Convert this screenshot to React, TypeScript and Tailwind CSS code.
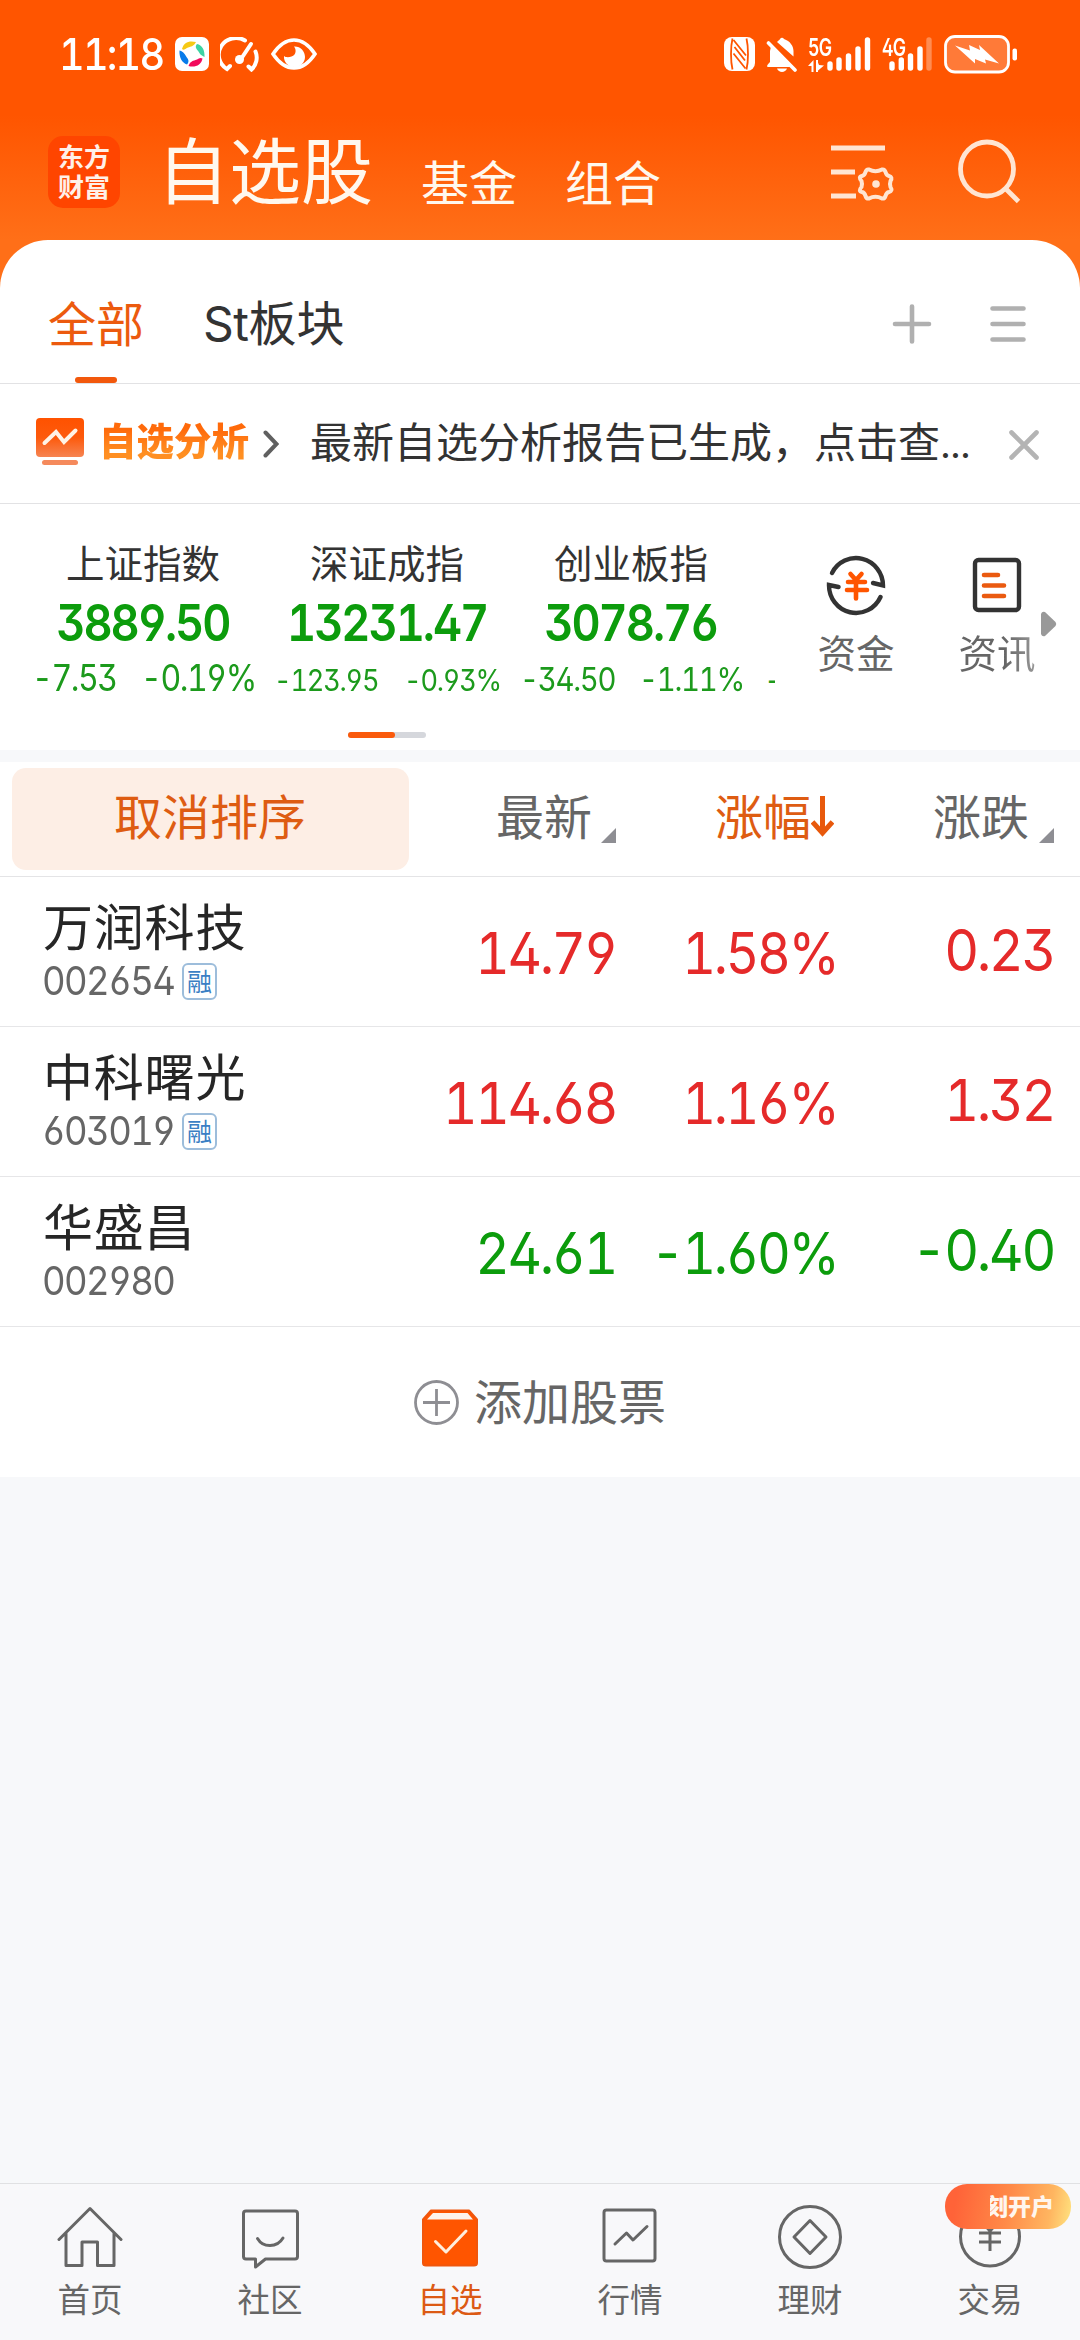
import type { ReactNode } from 'react';

type NumProps = { children: ReactNode; className?: string };

/** Condensed tabular figures used for every price on the page. */
function Num({ children, className = '' }: NumProps) {
  return (
    <span
      className={`inline-block whitespace-pre font-['Inter',sans-serif] leading-none tracking-[-0.045em] [font-feature-settings:'tnum','ss01','calt'_0] ${className}`}
    >
      {children}
    </span>
  );
}

function StatusBar() {
  return (
    <div className="flex h-[108px] items-center pl-[59px] pr-[62px] text-white">
      <span className="w-[116px] shrink-0">
        <Num className="origin-left scale-x-[0.9] text-[44px] font-medium">11:18</Num>
      </span>
      <svg width="34" height="34" viewBox="0 0 34 34">
        <rect width="34" height="34" rx="7" fill="#fff" />
        <path d="M7 12C9 5 14 3.500 21 5C19 9 16 9.500 13 10.500C10 11.500 9 14 7 12Z" fill="#f6c915" />
        <path d="M22 7C27 8 30 13 29.500 20C26 18.500 25 17 23.500 14.500C21.500 12 19.500 10 22 7Z" fill="#3cd3a3" />
        <path d="M4.500 13.500C9 15 10 17.500 11.500 20C13.500 22.500 14.500 24.500 12 27.500C7 26 4 20 4.500 13.500Z" fill="#087bea" />
        <path d="M13.500 29C15 25 17 24 20.500 23C23.500 22 25 20 27.500 21.500C26.500 28 20 31 13.500 29Z" fill="#f20a5c" />
      </svg>
      <svg className="ml-[11px]" width="39" height="35" viewBox="0 0 39 35" fill="none" stroke="#fff" strokeWidth="4" strokeLinecap="round">
        <path d="M25 3.500A17 16.500 0 0 0 7 32L10 29" />
        <path d="M35.500 14.500A17 16.500 0 0 1 31.500 32.500L28.500 29.500" />
        <path d="M31 7L21 22" strokeWidth="4" />
        <circle cx="19.500" cy="22.500" r="4.500" fill="#fff" stroke="none" />
      </svg>
      <svg className="ml-[12px]" width="46" height="32" viewBox="0 0 46 32">
        <path d="M2 16C8 7 15 2 23 2S38 7 44 16C38 25 31 30 23 30S8 25 2 16Z" fill="none" stroke="#fff" strokeWidth="3.600" />
        <path d="M23 8.500C29 8 34 13 34 19C34 25 29 29 23.500 29C17 29 12.500 24 13 18C15 20 21 19.500 23.500 16.500C25.500 13.500 24.500 10.500 23 8.500Z" fill="#fff" />
      </svg>

      <div className="ml-auto flex items-center">
        <svg width="31" height="34" viewBox="0 0 31 34">
          <rect width="31" height="34" rx="8" fill="#fff" />
          <path d="M8.500 1.500C6.500 10 6.500 24 8.500 32.500M22.500 1.500C24.500 10 24.500 24 22.500 32.500" fill="none" stroke="#ff5500" strokeWidth="1.800" />
          <path d="M9.500 3L22 18.500M10.500 10L21 23.500M9.500 16.500L21.500 31.500" fill="none" stroke="#ff5500" strokeWidth="1.800" />
        </svg>
        <svg className="ml-[11px]" width="32" height="35" viewBox="0 0 32 35">
          <path d="M11 5C12.500 3.500 13.500 3 14 2C15 .3 17 .3 18 2C24 4 27.500 9 27.500 14V19.500Z" fill="#fff" />
          <path d="M5 9.500L24.500 30H1.500C.5 28.500 1.500 27.500 4 25V14Z" fill="#fff" />
          <path d="M11 31.500H21C19.500 36 12.500 36 11 31.500Z" fill="#fff" />
          <path d="M2.500 6L29 33" stroke="#fff" strokeWidth="3.600" strokeLinecap="round" />
        </svg>
        <div className="ml-[10px] flex h-[36px] items-end">
          <div className="flex h-[36px] w-[19px] flex-col justify-between">
            <Num className="origin-left scale-x-[0.74] text-[24px] font-semibold">5G</Num>
            <svg width="17" height="12" viewBox="0 0 17 12" fill="#fff">
              <path d="M0 6L5.500 0V12H3.500V6ZM8 0H10L10 12H8ZM9.500 11V1.500L11 5L16 5.500Z" />
            </svg>
          </div>
          <svg width="44" height="36" viewBox="0 0 44 36" stroke="#fff" strokeWidth="5.400" strokeLinecap="round">
            <path d="M3 28V32M12 24V32M21.500 20V32M31 13V32M40.500 4V32" />
          </svg>
        </div>
        <div className="ml-[11px] flex h-[36px] items-end">
          <div className="flex h-[36px] w-[7px] flex-col">
            <Num className="origin-left scale-x-[0.74] text-[24px] font-semibold">4G</Num>
          </div>
          <svg width="44" height="36" viewBox="0 0 44 36" stroke="#fff" strokeWidth="5.400" strokeLinecap="round">
            <path d="M3 28V32M12.300 24V32M21.500 20V32M31 13V32" />
            <path d="M40 4V32" opacity=".32" />
          </svg>
        </div>
        <svg className="ml-[11px]" width="74" height="39" viewBox="0 0 74 39">
          <rect x="1.500" y="1.500" width="63" height="35.500" rx="9.500" fill="#ff7a38" stroke="#fff" strokeWidth="2.800" />
          <rect x="68.500" y="13.500" width="4.500" height="12" rx="2" fill="#fff" />
          <path d="M11 10.500L26 15.500L25 10L36 15L35 10L55 28.500L41 24.500L42 28.500L31 24L31 28.500Z" fill="#fff" />
        </svg>
      </div>
    </div>
  );
}

function Header() {
  return (
    <header className="h-[300px] shrink-0 bg-[linear-gradient(#ff5500_0,#ff5500_115px,#ff6f18_240px,#ff6f18_300px)]">
      <StatusBar />
      <div className="flex h-[132px] text-[#fff8ee]">
        <div className="ml-[48px] mt-[28px] flex h-[72px] w-[72px] items-start justify-center rounded-[15px] bg-[#ff4500] pt-[5px] text-[#fff0e8]">
          <span className="w-[52px] break-all text-[26px] font-bold leading-[30px]">东方财富</span>
        </div>
        <span className="ml-[37px] mt-[23px] text-[72px] leading-[72px]">自选股</span>
        <span className="ml-[48px] mt-[48px] text-[48px] leading-[48px]">基金</span>
        <span className="ml-[48px] mt-[48px] text-[48px] leading-[48px]">组合</span>
        <svg className="ml-auto mt-[34px]" width="64" height="62" viewBox="0 0 64 62" fill="none" stroke="#ffe5d2" strokeWidth="5">
          <path d="M0 6H54M0 30H24M0 54H25" />
          <path
            d="M38 27.500Q44.500 31 51 27.500Q53.500 27 54.500 30Q55.500 33.500 58 34Q62 35 59.500 39Q58.500 42 59.500 45Q62 49 58 50Q55.500 50.500 54.500 54Q53.500 57 51 56.500Q44.500 53 38 56.500Q35.500 57 34.500 54Q33.500 50.500 31 50Q27 49 30.500 45Q31.500 42 30.500 39Q27 35 31 34Q33.500 33.500 34.500 30Q35.500 27 38 27.500Z"
            strokeWidth="4"
          />
          <circle cx="45" cy="42" r="3.800" fill="#ffe5d2" stroke="none" />
        </svg>
        <svg className="ml-[63px] mr-[58px] mt-[31px]" width="64" height="66" viewBox="0 0 64 66" fill="none" stroke="#ffe5d2" strokeWidth="4.800">
          <ellipse cx="29" cy="30" rx="26.500" ry="27" />
          <path d="M47 49L60.500 62.500" />
        </svg>
      </div>
    </header>
  );
}

function Tabs() {
  return (
    <div className="flex h-[144px] items-center border-b border-[#e2e2e4] pl-[48px] pr-[54px]">
      <div className="flex h-full flex-col items-center justify-end text-[48px] text-[#ec5a0e]">
        <span className="leading-[48px]">全部</span>
        <span className="mt-[32px] h-[6px] w-[42px] rounded-full bg-[#f2580c]" />
      </div>
      <span className="ml-[59px] mt-[21px] text-[48px] leading-[48px] text-[#333]">
        <span className="font-['Inter',sans-serif] text-[48px] tracking-[-0.500px]">St</span>板块
      </span>
      <svg className="ml-auto mt-[24px]" width="40" height="40" viewBox="0 0 40 40" stroke="#b0b0b0" strokeWidth="4.600" strokeLinecap="round">
        <path d="M20 2.500V37.500M3 20H37" />
      </svg>
      <svg className="ml-[58px] mt-[24px]" width="36" height="40" viewBox="0 0 36 40" stroke="#b0b0b0" strokeWidth="4.600" strokeLinecap="round">
        <path d="M2.500 4.500H33.500M2.500 20H33.500M2.500 35.500H33.500" />
      </svg>
    </div>
  );
}

function Notice() {
  return (
    <div className="flex h-[120px] items-center border-b border-[#e2e2e4] pl-[36px] pr-[41px]">
      <svg className="-mt-[3px]" width="48" height="48" viewBox="0 0 48 48">
        <defs>
          <linearGradient id="chart" x2="0" y2="1">
            <stop stopColor="#ff5200" />
            <stop offset=".5" stopColor="#fd5a0c" />
            <stop offset="1" stopColor="#f68452" />
          </linearGradient>
        </defs>
        <rect width="48" height="39" rx="4" fill="url(#chart)" />
        <rect x="6" y="42" width="36" height="5" rx="2.500" fill="#f58a5c" />
        <path d="M8.500 25L20 14L28 24L39.500 12.500" fill="none" stroke="#fff3e6" strokeWidth="4" strokeLinecap="round" />
      </svg>
      <span className="-mt-[9px] ml-[15px] bg-gradient-to-b from-[#ff6a0a] from-30% to-[#ff8f22] to-80% bg-clip-text text-[37.500px] font-black leading-[48px] text-transparent">
        自选分析
      </span>
      <svg className="ml-[14px] mt-[1px]" width="16" height="28" viewBox="0 0 16 28" fill="none" stroke="#606060" strokeWidth="4" strokeLinecap="round">
        <path d="M2.500 2.500L13.500 14L2.500 25.500" />
      </svg>
      <span className="-mt-[3px] ml-[31px] whitespace-nowrap text-[42px] leading-[48px] text-[#333]">
        最新自选分析报告已生成，点击查<span className="font-['Inter',sans-serif] text-[38px] tracking-[-1px]">...</span>
      </span>
      <svg className="ml-auto mt-[2px]" width="30" height="30" viewBox="0 0 30 30" stroke="#b4b4b4" strokeWidth="4.600" strokeLinecap="round">
        <path d="M2.500 2.500L27.500 27.500M27.500 2.500L2.500 27.500" />
      </svg>
    </div>
  );
}

function IndexCard({ name, value, children }: { name: string; value: string; children: ReactNode }) {
  return (
    <div className="flex w-[244px] shrink-0 flex-col items-center">
      <span className="mt-[36px] h-[42px] text-[38.500px] leading-[42px] text-[#333]">{name}</span>
      <span className="mt-[15px] h-[51px]">
        <Num className="scale-x-[0.885] text-[51px] font-semibold text-[#0c9c0c]">{value}</Num>
      </span>
      <div className="mt-[10px] h-[40px] w-full whitespace-nowrap font-['Inter',sans-serif] text-[37px] leading-[40px] text-[#1c9a1c]">
        {children}
      </div>
    </div>
  );
}

function Indices() {
  return (
    <section className="flex h-[246px] flex-col">
      <div className="flex h-[228px]">
        <div className="flex w-[775px] overflow-hidden pl-[21px]">
          <IndexCard name="上证指数" value="3889.50">
            <Num className="ml-[11px] w-[109px] origin-left scale-x-[0.88] text-[36.500px]">-7.53</Num>
            <Num className="origin-left scale-x-[0.88] text-[36.500px]">-0.19%</Num>
          </IndexCard>
          <IndexCard name="深证成指" value="13231.47">
            <Num className="ml-[9px] w-[130px] origin-left scale-x-[0.92] text-[29.500px]">-123.95</Num>
            <Num className="origin-left scale-x-[0.92] text-[29.500px]">-0.93%</Num>
          </IndexCard>
          <IndexCard name="创业板指" value="3078.76">
            <Num className="ml-[11px] w-[119px] origin-left scale-x-[0.89] text-[33px]">-34.50</Num>
            <Num className="origin-left scale-x-[0.89] text-[33px]">-1.11%</Num>
          </IndexCard>
          <IndexCard name="" value="">
            <Num className="ml-[11px] text-[30px]">-</Num>
          </IndexCard>
        </div>
        <div className="ml-[41px] flex w-[80px] flex-col items-center">
          <svg className="mt-[50px]" width="60" height="62" viewBox="0 0 60 62" fill="none" strokeLinecap="round">
            <path d="M6 19A27 27.500 0 0 1 57 31.500L47 29" stroke="#333" strokeWidth="4.400" />
            <path d="M54.500 43A27 27.500 0 0 1 3 31L12.500 33" stroke="#333" strokeWidth="4.400" />
            <path d="M24.500 20L30 26L35.500 20M22 28H39M21 36H41M30 26V44.500" stroke="#ff5500" strokeWidth="4.600" />
          </svg>
          <span className="mt-[11px] whitespace-nowrap text-[38.500px] leading-[48px] text-[#666]">资金</span>
        </div>
        <div className="ml-[61px] flex w-[80px] flex-col items-center">
          <svg className="mt-[53px]" width="50" height="56" viewBox="0 0 50 56" fill="none" strokeLinecap="round">
            <rect x="3" y="3" width="44" height="50" rx="3.500" stroke="#333" strokeWidth="4.400" />
            <path d="M12 18H26M12 28.500H32M12 39H32" stroke="#ea5a10" strokeWidth="4.600" />
          </svg>
          <span className="mt-[14px] whitespace-nowrap bg-gradient-to-r from-[#666] from-60% to-[#999] bg-clip-text text-[38.500px] leading-[48px] text-transparent">资讯</span>
        </div>
        <svg className="ml-[4px] mt-[107px]" width="16" height="26" viewBox="0 0 16 26">
          <path d="M0 3Q1 0 4 1L14.500 11Q16 13 14.500 15L4 25Q1 26 0 23Z" fill="#999" />
        </svg>
      </div>
      <div className="ml-[348px] h-[6px] w-[78px] rounded-full bg-[#d5d7dc]">
        <div className="h-full w-[47px] rounded-full bg-[#fa5a0c]" />
      </div>
    </section>
  );
}

function Corner() {
  return (
    <svg className="mt-[38px] shrink-0" width="15" height="15" viewBox="0 0 15 15">
      <path d="M15 0V15H0Z" fill="#8e8e93" />
    </svg>
  );
}

function SortBar() {
  return (
    <div className="flex h-[115px] items-center border-b border-[#e4e4e6] text-[48px] leading-[48px] text-[#666]">
      <div className="ml-[12px] flex h-[102px] w-[397px] rounded-[14px] bg-[#fdeee5] pl-[102px] pt-[22px] text-[48px] text-[#de5c12]">
        取消排序
      </div>
      <div className="-mt-[10px] ml-[87px] flex h-[48px] w-[120px] items-start justify-between">
        <span>最新</span>
        <Corner />
      </div>
      <div className="-mt-[10px] ml-[99px] flex h-[48px] w-[119px] items-start justify-between text-[#de5c12]">
        <span>涨幅</span>
        <svg className="mt-[6px]" width="23" height="42" viewBox="0 0 23 42" fill="none" stroke="#e8590c" strokeWidth="5">
          <path d="M11.500 0V37M1.500 26L11.500 37L21.500 26" />
        </svg>
      </div>
      <div className="-mt-[10px] ml-[99px] flex h-[48px] w-[121px] items-start justify-between">
        <span>涨跌</span>
        <Corner />
      </div>
    </div>
  );
}

const stocks = [
  { name: '万润科技', code: '002654', margin: true, price: '14.79', pct: '1.58%', diff: '0.23', up: true },
  { name: '中科曙光', code: '603019', margin: true, price: '114.68', pct: '1.16%', diff: '1.32', up: true },
  { name: '华盛昌', code: '002980', margin: false, price: '24.61', pct: '-1.60%', diff: '-0.40', up: false },
];

function StockRow({ stock }: { stock: (typeof stocks)[number] }) {
  return (
    <div className={`flex h-[150px] border-b border-[#e6e6e8] ${stock.up ? 'text-[#e52a2a]' : 'text-[#0c9c0c]'}`}>
      <div className="ml-[43px] w-[300px]">
        <div className="mt-[21px] text-[50px] leading-[52px] tracking-[0.800px] text-[#262626]">{stock.name}</div>
        <div className="mt-[12px] flex h-[39px] items-center text-[#666]">
          <span className="-ml-[1px] w-[140px]">
            <Num className="origin-left scale-x-[0.925] text-[39.500px]">{stock.code}</Num>
          </span>
          {stock.margin && (
            <span className="flex h-[37px] w-[35px] items-start justify-center rounded-[6px] border-2 border-[#9dbddb] text-[25px] leading-[30px] text-[#3b7fc4]">
              融
            </span>
          )}
        </div>
      </div>
      <div className="mt-[47px] w-[273px] text-right">
        <Num className="origin-right scale-x-[0.92] text-[58px]">{stock.price}</Num>
      </div>
      <div className="mt-[47px] w-[221px] text-right">
        <Num className="origin-right scale-x-[0.9] text-[58px]">{stock.pct}</Num>
      </div>
      <div className="mt-[44px] w-[217px] text-right">
        <Num className="origin-right scale-x-[0.93] text-[58px]">{stock.diff}</Num>
      </div>
    </div>
  );
}

function AddStock() {
  return (
    <div className="flex h-[150px] items-center pl-[414px] text-[#666]">
      <svg width="45" height="45" viewBox="0 0 45 45" fill="none" stroke="#8e8e93" strokeWidth="2.800">
        <circle cx="22.500" cy="22.500" r="21" />
        <path d="M22.500 9V36M9 22.500H36" />
      </svg>
      <span className="-mt-[6px] ml-[15px] text-[48px] leading-[48px]">添加股票</span>
    </div>
  );
}

function NavItem({ label, active = false, children }: { label: string; active?: boolean; children: ReactNode }) {
  return (
    <div className={`flex w-[180px] flex-col items-center ${active ? 'text-[#dc5a14]' : 'text-[#666]'}`}>
      <svg className="mt-[21px]" width="66" height="66" viewBox="0 0 66 66" fill="none" stroke="#666" strokeWidth="3" strokeLinecap="round" strokeLinejoin="round">
        {children}
      </svg>
      <span className="mt-[9px] text-[32.500px] leading-[36px]">{label}</span>
    </div>
  );
}

function BottomNav() {
  return (
    <nav className="flex h-[157px] shrink-0 border-t border-[#e0e1e3] bg-[#f8f8fa]">
      <NavItem label="首页">
        <path d="M2 34.500L33 3.500L64 34.500M9 28V60.500H25V37H40.500V60.500H57V28" />
      </NavItem>
      <NavItem label="社区">
        <path d="M9 6H58Q60.500 6 60.500 8.500V51.500Q60.500 54 58 54H28.500L18.500 62V54H9Q6.500 54 6.500 51.500V8.500Q6.500 6 9 6Z" />
        <path d="M20.500 33.500C26 43 40 43 46 33" />
      </NavItem>
      <NavItem label="自选" active>
        <path d="M14 5.500H52L60 14.500V58Q60 60.500 57 60.500H9Q6 60.500 6 58V14.500Z" fill="#ff5500" stroke="#f0560c" strokeWidth="2" />
        <path d="M16 8H50.500L56 14.500H10Z" fill="#fdf3ec" stroke="none" />
        <path d="M18.500 36.500L29 47L49 26" stroke="#ffeedd" />
      </NavItem>
      <NavItem label="行情">
        <rect x="7" y="5" width="51" height="51" rx="2.500" />
        <path d="M18 39L29.500 28L36 35L50 21.500" />
      </NavItem>
      <NavItem label="理财">
        <circle cx="33" cy="32" r="30.500" />
        <path d="M33 15.500L49 32L33 48.500L17 32Z" />
      </NavItem>
      <div className="relative">
        <NavItem label="交易">
          <circle cx="33" cy="31.500" r="29.500" />
          <path d="M23 15L33 26L43 15M22 28H44M22 37H44M33 26V46" strokeLinecap="butt" />
        </NavItem>
        <div className="absolute left-[45px] top-0 flex h-[45px] w-[126px] items-center rounded-[22px] bg-[linear-gradient(100deg,#ff6338_10%,#ff8a48_50%,#ffb560_82%,#ffe480_100%)]">
          <div className="ml-[45px] flex h-[34px] w-[64px] justify-end overflow-hidden">
            <span className="whitespace-nowrap text-[23px] font-black leading-[30px] text-[#fff6ee]">立刻开户</span>
          </div>
        </div>
      </div>
    </nav>
  );
}

export default function App() {
  return (
    <div className="flex h-[2340px] w-[1080px] flex-col overflow-hidden bg-[#f7f8fa] font-['Noto_Sans_CJK_SC',sans-serif]">
      <Header />
      <main className="-mt-[60px] flex-1">
        <div className="rounded-t-[48px] bg-white">
          <Tabs />
          <Notice />
          <Indices />
        </div>
        <div className="mt-[12px] bg-white">
          <SortBar />
          {stocks.map((stock) => (
            <StockRow key={stock.code} stock={stock} />
          ))}
          <AddStock />
        </div>
      </main>
      <BottomNav />
    </div>
  );
}
